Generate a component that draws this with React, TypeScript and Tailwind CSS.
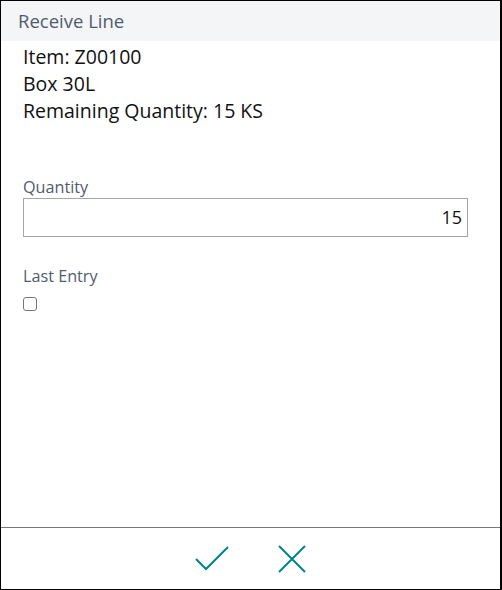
import React from "react";

export default function App() {
  const font = { fontFamily: '"Segoe UI", "Open Sans", "Noto Sans", sans-serif' };
  return (
    <div className="w-[502px] h-[590px] bg-white border border-black border-r-2 flex flex-col" style={font}>
      <div className="h-[40px] bg-[#f4f5f7] flex items-center pl-[17px] text-[18.5px] text-[#505c6d] shrink-0">
        Receive Line
      </div>
      <div className="flex-1 flex flex-col pl-[22px] pr-[32px]">
        <div className="text-[19.5px] leading-[27px] text-[#111] pt-[2px]">
          <div>Item: Z00100</div>
          <div>Box 30L</div>
          <div>Remaining Quantity: 15 KS</div>
        </div>
        <div className="mt-[52px] text-[16.2px] leading-[22px] text-[#505c6d]">Quantity</div>
        <div className="h-[39px] border border-[#a6a6a6] flex items-center justify-end pr-[5px] text-[18px] text-[#111]">
          15
        </div>
        <div className="mt-[28px] text-[16.2px] leading-[22px] text-[#505c6d]">Last Entry</div>
        <div className="mt-[10px] w-[14px] h-[14px] border border-[#767676] rounded-[3px]" />
      </div>
      <div className="h-[62px] border-t border-[#777] flex items-center justify-center gap-[48px] shrink-0">
        <svg width="36" height="28" viewBox="0 0 36 28" className="ml-[-2px]">
          <path d="M2 14 L12 24 L34 2" fill="none" stroke="#00838a" strokeWidth="2" />
        </svg>
        <svg width="28" height="28" viewBox="0 0 28 28">
          <path d="M1 1 L27 27 M27 1 L1 27" fill="none" stroke="#00838a" strokeWidth="2" />
        </svg>
      </div>
    </div>
  );
}
